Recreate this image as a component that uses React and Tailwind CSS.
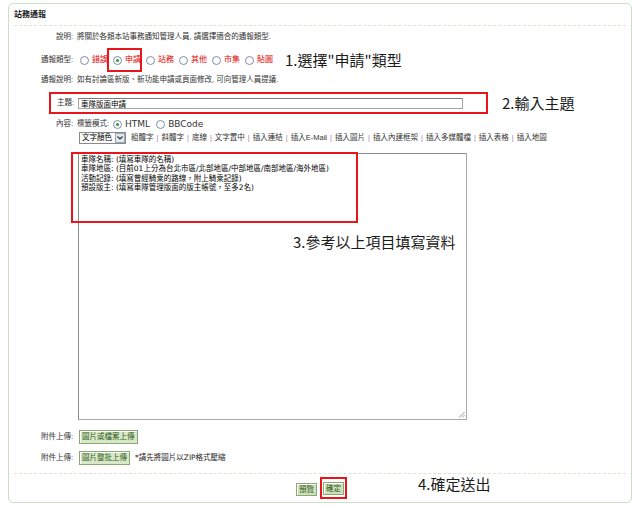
import { useState } from 'react'

const Radio = ({ checked }) => (
  <span className="inline-flex w-[9px] h-[9px] shrink-0 items-center justify-center rounded-full border border-[#7d90aa] bg-white">
    {checked && <span className="w-[3px] h-[3px] rounded-full bg-[#2c9a2c]" />}
  </span>
)

const Label = ({ children }) => (
  <div className="w-[67px] shrink-0 text-right pr-[3px]">{children}</div>
)

const GreenButton = ({ children }) => (
  <span className="inline-flex items-center h-[14px] px-[2px] border border-[#8ba874] bg-[#d8e7c8] text-[#2f5b17] shadow-[inset_1px_1px_0_#fff]">
    {children}
  </span>
)

const Note = ({ children }) => (
  <span className="text-[15px] leading-[16px] text-[#1b1b1b] font-['Noto_Sans_CJK_TC',sans-serif]">
    {children}
  </span>
)

const types = ['錯誤', '申請', '站務', '其他', '市集', '貼圖']
const tools = ['粗體字', '斜體字', '底線', '文字置中', '插入連結', '插入E-Mail', '插入圖片', '插入內建框架', '插入多媒體檔', '插入表格', '插入地圖']

const App = () => {
  const [type, setType] = useState('申請')
  const [subject, setSubject] = useState('車隊版面申請')

  return (
    <div className="w-[640px] h-[507px] bg-white pt-[3px] pl-[8px] text-[7.5px] leading-[10px] text-[#333] font-['Liberation_Sans','Noto_Sans_CJK_TC',sans-serif]">
      <div className="w-[624px] h-[500px] rounded-[5px] border border-[#c6e2c0] bg-white flex flex-col">
        <div className="h-[21px] px-[5px] flex items-center text-[8px] font-bold text-[#222]">站務通報</div>
        <div className="mx-[5px] border-b border-dashed border-[#d6e8d2]" />

        <div className="h-[22px] flex items-center">
          <Label>說明:</Label>
          <div className="pl-[1px]">將關於各類本站事務通知管理人員, 請選擇適合的通報類型.</div>
        </div>

        <div className="h-[24px] flex items-center">
          <Label>通報類型:</Label>
          <div className="flex items-center pl-[4px] gap-[5px] text-[8px]">
            {types.map((t) => (
              <span
                key={t}
                onClick={() => setType(t)}
                className="relative flex items-center gap-[3px] cursor-pointer"
              >
                <Radio checked={type === t} />
                <span className="text-[#e00000]">{t}</span>
                {t === '申請' && (
                  <span className="absolute -left-[6px] -right-[1px] -top-[7px] -bottom-[7px] border-2 border-[#e8161b]" />
                )}
              </span>
            ))}
          </div>
          <div className="ml-[12px]">
            <Note>1.選擇"申請"類型</Note>
          </div>
        </div>

        <div className="h-[16px] flex items-center">
          <Label>通報說明:</Label>
          <div className="pl-[1px]">如有討論區新版、新功能申請或頁面修改, 可向管理人員提議.</div>
        </div>

        <div className="mt-[4px] flex items-center">
          <div className="ml-[40px] w-[439px] h-[22px] border-2 border-[#e8161b] flex items-center">
            <div className="w-[25px] pr-[2px] text-right">主題:</div>
            <input
              value={subject}
              onChange={(e) => setSubject(e.target.value)}
              className="ml-[2px] w-[385px] h-[11px] px-[2px] border border-[#a4a4a4] border-t-[#7a7a7a] text-[7.5px] text-black outline-none"
            />
          </div>
          <div className="ml-[14px]">
            <Note>2.輸入主題</Note>
          </div>
        </div>

        <div className="mt-[2px] h-[16px] flex items-center">
          <Label>內容:</Label>
          <div className="pl-[1px] flex items-center">
            <span>標籤模式:</span>
            <span className="ml-[4px] flex items-center gap-[3px] font-['DejaVu_Sans',sans-serif]">
              <Radio checked />
              <span className="text-[9px]">HTML</span>
            </span>
            <span className="ml-[6px] flex items-center gap-[3px] font-['DejaVu_Sans',sans-serif]">
              <Radio />
              <span className="text-[9px]">BBCode</span>
            </span>
          </div>
        </div>

        <div className="h-[12px] flex items-center pl-[70px]">
          <span className="flex items-center h-[12px] w-[47px] border border-[#8a8a8a] bg-white">
            <span className="pl-[2px] flex-1 text-black">文字顏色</span>
            <span className="w-[10px] h-[10px] border border-[#9aa6b8] bg-[#e4e8ee] flex items-center justify-center">
              <svg width="6" height="4" viewBox="0 0 6 4">
                <path d="M0.5 0.5 L3 3 L5.5 0.5" fill="none" stroke="#333" strokeWidth="1.2" />
              </svg>
            </span>
          </span>
          <span className="ml-[5px] flex items-center">
            {tools.map((t, i) => (
              <span key={t} className="flex items-center">
                {i > 0 && <span className="mx-[3px] text-[#a57aa5]">|</span>}
                <span>{t}</span>
              </span>
            ))}
          </span>
        </div>

        <div className="mt-[9px] ml-[69px] relative w-[389px] h-[267px] border border-[#a9a9a9] border-t-[#8c8c8c] border-l-[#8c8c8c] bg-white">
          <div className="pl-[2px] pt-[1px] leading-[9.3px] text-black font-['DejaVu_Sans','Noto_Sans_CJK_TC',sans-serif]">
            <div>車隊名稱: (填寫車隊的名稱)</div>
            <div>車隊地區: (目前01上分為台北市區/北部地區/中部地區/南部地區/海外地區)</div>
            <div>活動記錄: (填寫曾經騎乘的路線，附上騎乘記錄)</div>
            <div>預設版主: (填寫車隊管理版面的版主帳號，至多2名)</div>
          </div>
          <span className="absolute -left-[8px] -top-[2px] w-[287px] h-[71px] border-2 border-[#e8161b]" />
          <span className="absolute left-[214px] top-[80px] whitespace-nowrap">
            <Note>3.參考以上項目填寫資料</Note>
          </span>
          <svg className="absolute right-[1px] bottom-[1px]" width="7" height="7" viewBox="0 0 7 7">
            <path d="M6.5 1 L1 6.5 M6.5 4 L4 6.5" stroke="#9a9a9a" strokeWidth="1" />
          </svg>
        </div>

        <div className="mt-[10px] h-[14px] flex items-center">
          <Label>附件上傳:</Label>
          <div className="pl-[3px]">
            <GreenButton>圖片或檔案上傳</GreenButton>
          </div>
        </div>

        <div className="mt-[7px] h-[14px] flex items-center">
          <Label>附件上傳:</Label>
          <div className="pl-[3px] flex items-center">
            <GreenButton>圖片整批上傳</GreenButton>
            <span className="ml-[5px] text-[#222] font-['DejaVu_Sans','Noto_Sans_CJK_TC',sans-serif]">*請先將圖片以ZIP格式壓縮</span>
          </div>
        </div>

        <div className="mt-[8px] mx-[5px] border-b border-dashed border-[#d6e8d2]" />

        <div className="flex items-start pl-[287px]">
          <span className="mt-[9px]">
            <span className="inline-flex items-center h-[13px] px-[2px] border border-[#8ba874] bg-[#cfe0bd] text-[#2f5b17] shadow-[inset_1px_1px_0_#fff]">預覽</span>
          </span>
          <span className="ml-[3px] mt-[3px] p-[1px] border-2 border-[#e8161b] flex">
            <span className="mt-[2px] mb-[1px] inline-flex items-center h-[13px] px-[2px] border border-[#8ba874] bg-[#cfe0bd] text-[#2f5b17] shadow-[inset_1px_1px_0_#fff]">確定</span>
          </span>
          <span className="ml-[71px] mt-[2px]">
            <Note>4.確定送出</Note>
          </span>
        </div>
      </div>
    </div>
  )
}

export default App
